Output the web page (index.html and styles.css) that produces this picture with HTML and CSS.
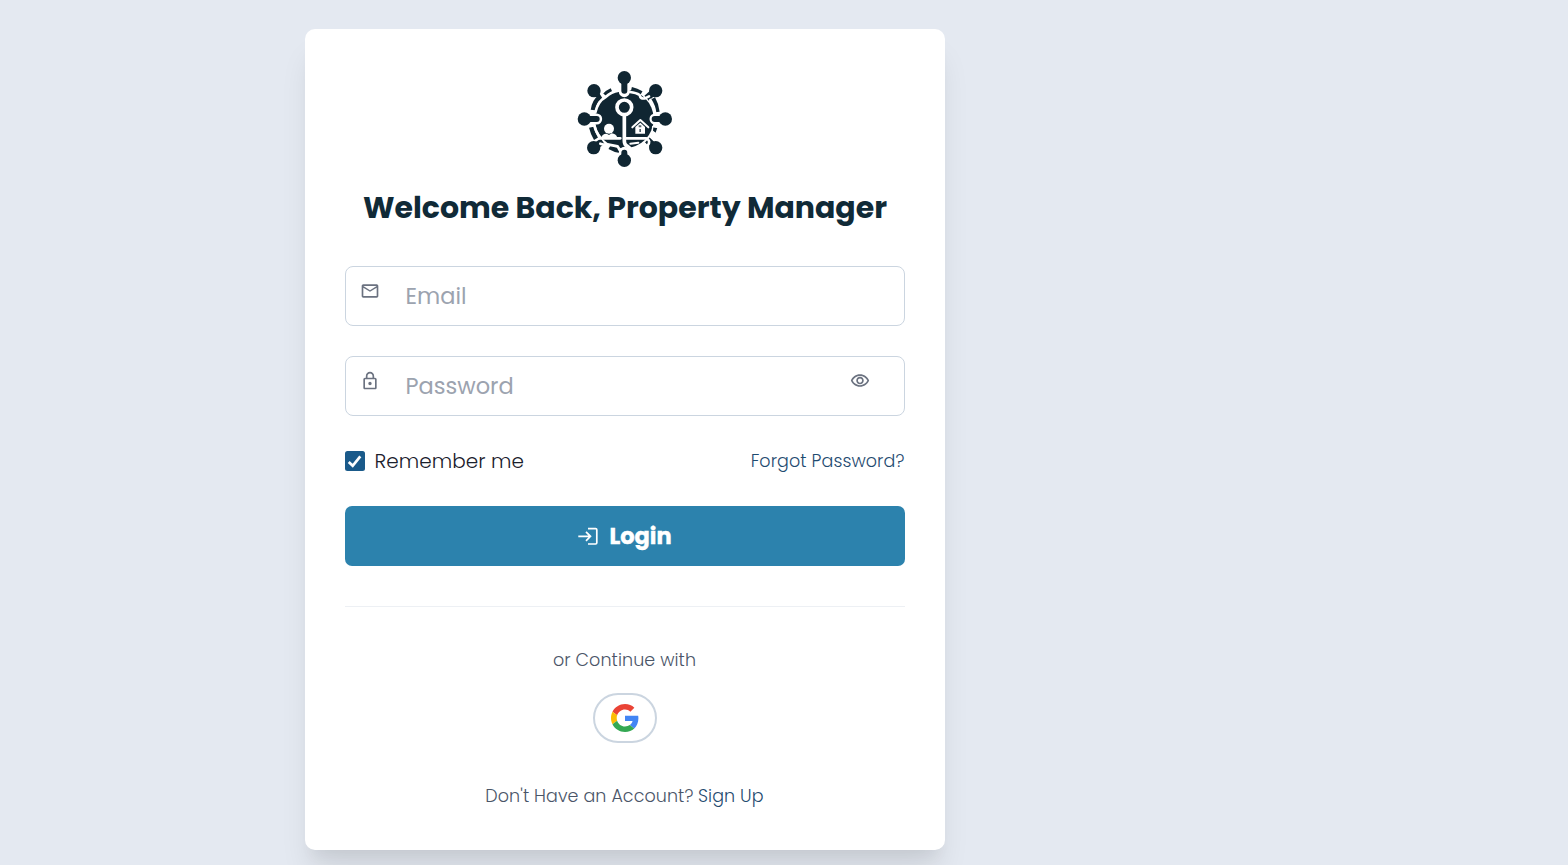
FILE: index.html
```html
<!DOCTYPE html>
<html lang="en">
<head>
<meta charset="utf-8">
<title>Login</title>
<link rel="stylesheet" href="styles.css">
</head>
<body>
<main class="card">
  <svg class="logo" viewBox="0 0 330 330" aria-hidden="true">
    <circle cx="163" cy="165" r="88" fill="#102632"/>
    <g fill="none" stroke="#102632" stroke-width="14">
      <path d="M69 138Q73 112 88 101L76 82M105 93Q112 85 125 79M184 76Q200 80 214 88M249 103Q259 120 262 144M64 190Q68 208 78 224M119 249Q134 258 150 260"/>
      <path d="M250 85L230 103M74 248L98 232M253 248L232 228" stroke-width="20"/>
    </g>
    <g fill="none" stroke="#fff" stroke-width="33" stroke-linecap="round">
      <path d="M163 76V83M78 165H80M257 165H255M163 266V265"/>
    </g>
    <g fill="none" stroke="#102632" stroke-width="18" stroke-linecap="round">
      <path d="M163 42V80M43 165H80M286 165H254M163 289V266"/>
    </g>
    <g fill="#102632">
      <circle cx="163" cy="41" r="20"/><circle cx="72" cy="80" r="20"/><circle cx="257" cy="80" r="20"/><circle cx="43" cy="165" r="20"/><circle cx="286" cy="165" r="20"/><circle cx="71" cy="251" r="20"/><circle cx="257" cy="251" r="20"/><circle cx="163" cy="289" r="20"/>
    </g>
    <g fill="none" stroke="#fff" stroke-width="8" stroke-linecap="round" stroke-linejoin="round">
      <path d="M76 145Q84 111 107 99Q124 83 146 80M180 84Q199 86 209 93Q211 106 225 103L237 97M241 108Q253 126 255 146M73 184Q77 205 91 221"/>
      <circle cx="163" cy="130" r="22" stroke-width="11"/>
      <path d="M163 155V231Q163 243 171 246L181 254" stroke-width="11"/>
      <path d="M88 223H151M167 223H228Q245 230 232 246Q210 262 184 263M91 239Q105 244 116 242L143 247L149 258"/>
      <path d="M181 239L205 236M198 253L211 244L225 240M181 254L176 264M187 190L211 168L235 190" stroke-width="6"/>
    </g>
    <g fill="#fff">
      <circle cx="117" cy="194" r="15"/><path d="M94 220Q98 208 110 209L117 213L125 208Q138 209 142 221Z"/>
      <path d="M196 189L211 176L225 189V209H196Z"/>
    </g>
    <path d="M248 188L264 191L258 209L247 201Z" fill="#102632" stroke="#fff" stroke-width="4"/>
    <path d="M206 184H214V190H206ZM208 195H213V204H208Z" fill="#53636c"/>
  </svg>
  <h1 class="title">Welcome Back, Property Manager</h1>
  <form class="form">
    <div class="field">
      <svg class="icon" viewBox="0 0 24 24"><path d="M22 6c0-1.100-.9-2-2-2H4c-1.100 0-2 .9-2 2v12c0 1.100.9 2 2 2h16c1.100 0 2-.9 2-2V6zm-2 0l-8 5-8-5h16zm0 12H4V8l8 5 8-5v10z"/></svg>
      <span class="placeholder">Email</span>
    </div>
    <div class="field">
      <svg class="icon" viewBox="0 0 24 24"><path d="M18 8h-1V6c0-2.760-2.240-5-5-5S7 3.240 7 6v2H6c-1.100 0-2 .9-2 2v10c0 1.100.9 2 2 2h12c1.100 0 2-.9 2-2V10c0-1.100-.9-2-2-2zM9 6c0-1.660 1.340-3 3-3s3 1.340 3 3v2H9V6zm9 14H6V10h12v10zm-6-3c1.100 0 2-.9 2-2s-.9-2-2-2-2 .9-2 2 .9 2 2 2z"/></svg>
      <span class="placeholder">Password</span>
      <svg class="icon eye" viewBox="0 0 24 24"><path d="M12 6c3.790 0 7.170 2.130 8.820 5.500C19.170 14.870 15.790 17 12 17s-7.170-2.130-8.820-5.500C4.830 8.130 8.210 6 12 6m0-2C7 4 2.730 7.110 1 11.500 2.730 15.890 7 19 12 19s9.270-3.110 11-7.500C21.270 7.110 17 4 12 4zm0 5c1.380 0 2.500 1.120 2.500 2.500S13.380 14 12 14s-2.500-1.120-2.500-2.500S10.620 9 12 9m0-2c-2.480 0-4.500 2.020-4.500 4.500S9.520 16 12 16s4.500-2.020 4.500-4.500S14.480 7 12 7z"/></svg>
    </div>
    <div class="options">
      <span class="remember">
        <svg class="checkbox" viewBox="0 0 20 20"><rect width="20" height="20" rx="2.500"/><path d="M3.700 11L7.700 14.800L15.300 5.300"/></svg>
        <span>Remember me</span>
      </span>
      <a class="forgot">Forgot Password?</a>
    </div>
    <div class="login">
      <svg class="login-icon" viewBox="0 0 20 20"><path d="M.3 10.300H12.300M8 5.800L12.500 10.300L8 14.800"/><path d="M10 2.600H17.600Q18.800 2.600 18.800 3.800V16.800Q18.800 18 17.600 18H10"/></svg>
      <span>Login</span>
    </div>
  </form>
  <hr class="divider">
  <p class="continue">or Continue with</p>
  <div class="google">
    <svg class="google-icon" viewBox="0 0 48 48"><path fill="#EA4335" d="M24 9.500c3.540 0 6.710 1.220 9.210 3.600l6.850-6.850C35.900 2.380 30.470 0 24 0 14.620 0 6.510 5.380 2.560 13.220l7.980 6.190C12.430 13.720 17.740 9.500 24 9.500z"/><path fill="#4285F4" d="M46.980 24.550c0-1.570-.15-3.090-.38-4.550H24v9.020h12.940c-.58 2.960-2.260 5.480-4.780 7.180l7.730 6c4.510-4.180 7.090-10.360 7.090-17.650z"/><path fill="#FBBC05" d="M10.530 28.590c-.48-1.450-.76-2.990-.76-4.590s.27-3.140.76-4.590l-7.980-6.190C.92 16.460 0 20.120 0 24c0 3.880.92 7.540 2.560 10.780l7.970-6.190z"/><path fill="#34A853" d="M24 48c6.480 0 11.930-2.130 15.890-5.810l-7.730-6c-2.150 1.450-4.920 2.300-8.160 2.300-6.260 0-11.570-4.220-13.470-9.910l-7.980 6.190C6.510 42.620 14.620 48 24 48z"/></svg>
  </div>
  <p class="account"><span>Don't Have an Account?</span><a class="signup">Sign Up</a></p>
</main>
</body>
</html>
```
FILE: styles.css
```css
* { box-sizing: border-box; }
html { height: 100%; overflow: hidden; }
body {
  margin: 0;
  height: 865px;
  overflow: hidden;
  padding: 29px 0 0 305px;
  background: #e4e9f1;
  font-family: Poppins, Inter, "Open Sans", sans-serif;
  font-weight: 300;
}
.card {
  width: 640px;
  height: 821px;
  padding: 35px 40px 0;
  display: flex;
  flex-direction: column;
  align-items: center;
  background: #fff;
  border-radius: 10px;
  box-shadow: 0 25px 31px -6px rgba(0, 0, 0, .1), 0 12px 13px -6px rgba(0, 0, 0, .04);
}
.logo { width: 110px; height: 110px; flex: none; }
.title {
  margin: 11px 0 0;
  height: 45px;
  line-height: 45px;
  font-size: 30px;
  font-weight: 700;
  letter-spacing: -.02px;
  color: #102a37;
  white-space: nowrap;
}
.form { width: 560px; margin-top: 36px; display: flex; flex-direction: column; }
.field {
  display: flex;
  height: 60px;
  margin-bottom: 30px;
  padding: 0 34px 0 14px;
  border: 1px solid #cbd5e0;
  border-radius: 8px;
  color: #9ca3af;
}
.icon { width: 20px; height: 20px; margin-top: 14px; fill: #6b7280; flex: none; }
.eye { margin-left: auto; }
.placeholder { margin-left: 25.500px; font-size: 22.500px; line-height: 58px; font-weight: 400; }
.options { display: flex; justify-content: space-between; align-items: center; height: 30px; }
.remember { display: flex; align-items: center; gap: 9.500px; color: #1a202c; font-size: 20px; letter-spacing: .05px; }
.checkbox { width: 20px; height: 20px; fill: #1a5a8a; }
.checkbox path { fill: none; stroke: #fff; stroke-width: 2.700; }
.forgot { margin-right: .5px; color: #1f4b70; font-size: 17.500px; letter-spacing: .09px; white-space: nowrap; }
.login {
  margin-top: 30px;
  height: 60px;
  display: flex;
  align-items: center;
  justify-content: center;
  gap: 11px;
  background: #2c82ad;
  border-radius: 7px;
  color: #fff;
  font-size: 22.500px;
  font-weight: 700;
  -webkit-text-stroke: .4px #fff;
}
.login-icon { width: 20px; height: 20px; fill: none; stroke: #fff; stroke-width: 1.700; }
.divider { width: 560px; height: 1px; margin: 40px 0 0; border: 0; background: #edf0f4; flex: none; }
.continue { margin: 40px 1px 0 0; height: 26px; line-height: 26px; font-size: 17.500px; letter-spacing: .08px; color: #4a5568; white-space: nowrap; }
.google {
  width: 64px;
  height: 50px;
  margin-top: 20px;
  display: flex;
  align-items: center;
  justify-content: center;
  border: 2px solid #cbd5e0;
  border-radius: 25px;
}
.google-icon { width: 28px; height: 28px; }
.account { display: flex; gap: 4.500px; margin: 40px 1px 0 0; height: 26px; line-height: 26px; font-size: 17.500px; letter-spacing: .08px; color: #4a5568; white-space: nowrap; }
.signup { color: #1f4b70; }
```
